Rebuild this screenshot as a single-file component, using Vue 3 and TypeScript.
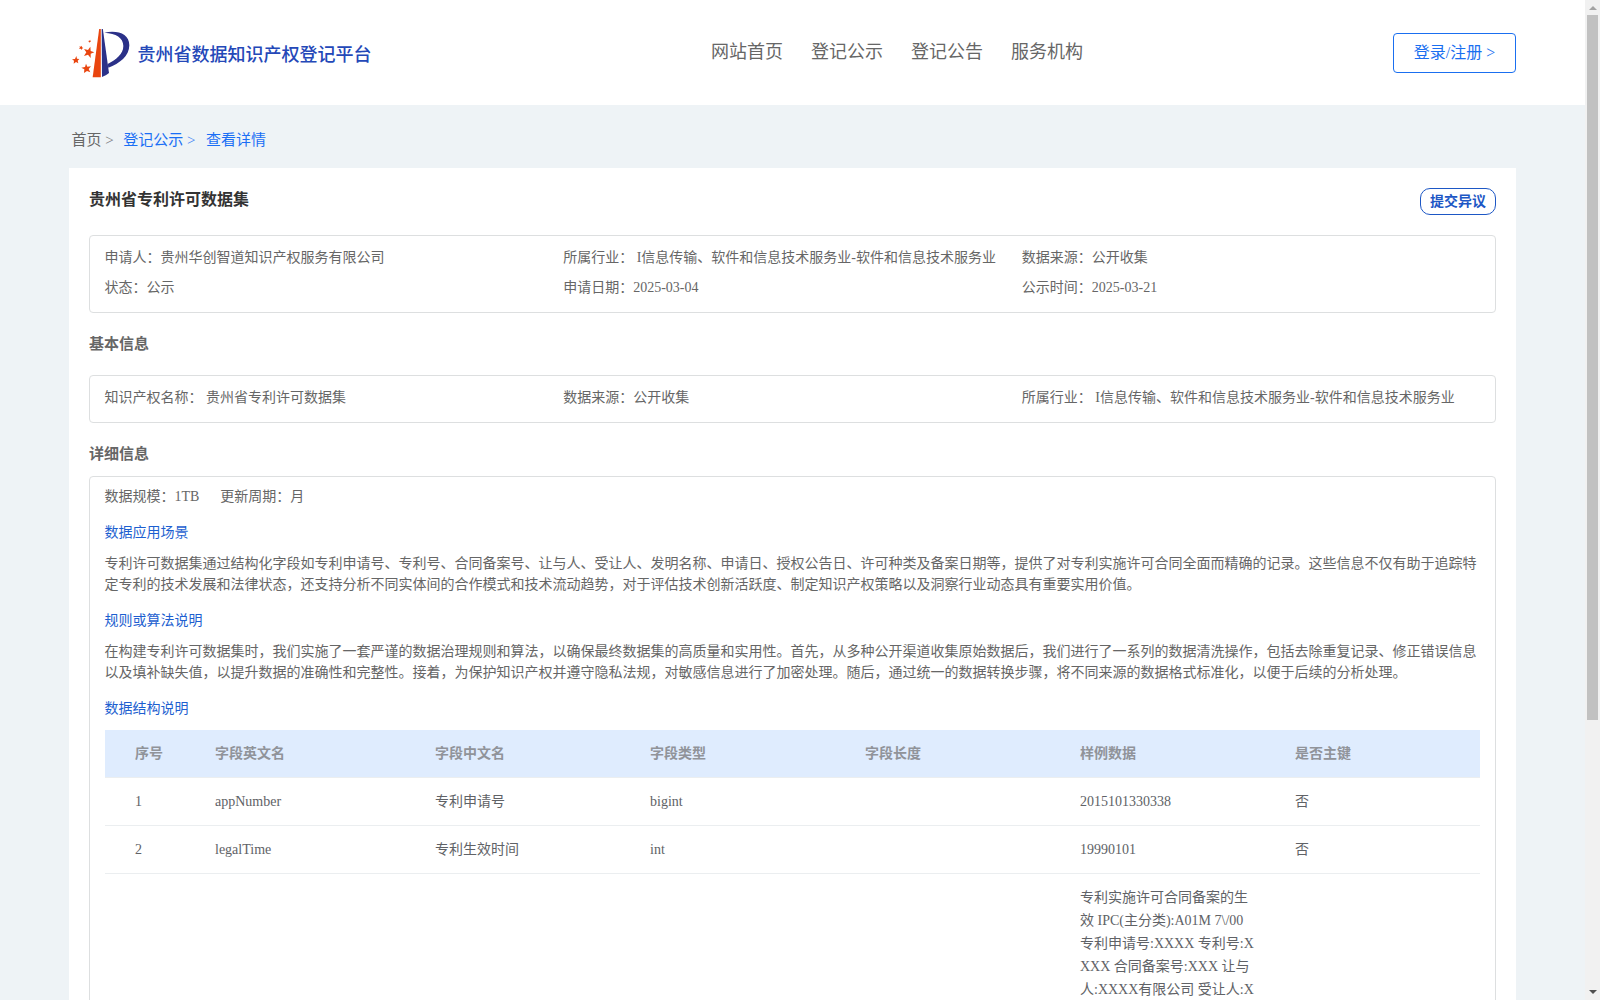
<script setup lang="ts">
const navItems: string[] = ['网站首页', '登记公示', '登记公告', '服务机构']

const summary: string[] = [
  '申请人：贵州华创智道知识产权服务有限公司',
  '所属行业： I信息传输、软件和信息技术服务业-软件和信息技术服务业',
  '数据来源：公开收集',
  '状态：公示',
  '申请日期：2025-03-04',
  '公示时间：2025-03-21',
]

const basics: string[] = [
  '知识产权名称： 贵州省专利许可数据集',
  '数据来源：公开收集',
  '所属行业： I信息传输、软件和信息技术服务业-软件和信息技术服务业',
]

interface Section {
  title: string
  lines: string[]
}

const sections: Section[] = [
  {
    title: '数据应用场景',
    lines: [
      '专利许可数据集通过结构化字段如专利申请号、专利号、合同备案号、让与人、受让人、发明名称、申请日、授权公告日、许可种类及备案日期等，提供了对专利实施许可合同全面而精确的记录。这些信息不仅有助于追踪特',
      '定专利的技术发展和法律状态，还支持分析不同实体间的合作模式和技术流动趋势，对于评估技术创新活跃度、制定知识产权策略以及洞察行业动态具有重要实用价值。',
    ],
  },
  {
    title: '规则或算法说明',
    lines: [
      '在构建专利许可数据集时，我们实施了一套严谨的数据治理规则和算法，以确保最终数据集的高质量和实用性。首先，从多种公开渠道收集原始数据后，我们进行了一系列的数据清洗操作，包括去除重复记录、修正错误信息',
      '以及填补缺失值，以提升数据的准确性和完整性。接着，为保护知识产权并遵守隐私法规，对敏感信息进行了加密处理。随后，通过统一的数据转换步骤，将不同来源的数据格式标准化，以便于后续的分析处理。',
    ],
  },
]

const headers: string[] = ['序号', '字段英文名', '字段中文名', '字段类型', '字段长度', '样例数据', '是否主键']

const rows: string[][] = [
  ['1', 'appNumber', '专利申请号', 'bigint', '', '2015101330338', '否'],
  ['2', 'legalTime', '专利生效时间', 'int', '', '19990101', '否'],
  [
    '',
    '',
    '',
    '',
    '',
    '专利实施许可合同备案的生\n效 IPC(主分类):A01M 7\\/00\n专利申请号:XXXX 专利号:X\nXXX 合同备案号:XXX 让与\n人:XXXX有限公司 受让人:X',
    '',
  ],
]
</script>

<template>
  <div class="window">
    <div class="page">
      <header class="header">
        <div class="brand">
          <svg class="logo" viewBox="36 54 174 150" aria-hidden="true">
            <path d="M117.500 57h5v145H98z" fill="#e9450f" />
            <path d="M125 57h3.500L147 189q-9 8-21 12z" fill="#2b3188" />
            <path
              d="M133 68C174 60 208 72 208 106C208 138 179 161 145 173L143 162C169 149 190 132 190 108C190 83 168 70 133 68z"
              fill="#2b3188"
            />
            <g fill="#e9450f">
              <path d="M91 110l1 13 11 4-11 4v13l-8-10-12 4 7-11-7-10 12 3z" />
              <path d="M49 138l2 8 7 1-5 5 2 8-7-4-7 5 1-9-6-4 9-1z" />
              <path d="M78 161l4 9 11-1-7 8 5 10-10-4-9 6 1-11-9-5 11-2z" />
              <path d="M65 107l1 5 4 2-4 2-1 4-3-4-5 0 3-4-2-4 4 2z" />
              <path d="M91 89l0 4 2 2-3 1-2 2-1-3-3-2 4-1z" />
            </g>
          </svg>
          <span class="brand-name">贵州省数据知识产权登记平台</span>
        </div>
        <nav class="nav">
          <a v-for="item in navItems" :key="item">{{ item }}</a>
        </nav>
        <button class="login">登录/注册 &gt;</button>
      </header>

      <div class="crumbs">
        <span>首页 <i>&gt;</i></span>
        <a class="second">登记公示 <i>&gt;</i></a>
        <a class="third">查看详情</a>
      </div>

      <main class="card">
        <div class="title-row">
          <h1>贵州省专利许可数据集</h1>
          <button class="objection">提交异议</button>
        </div>

        <div class="box summary">
          <span v-for="item in summary" :key="item">{{ item }}</span>
        </div>

        <h2 class="basic-title">基本信息</h2>
        <div class="box basics">
          <span v-for="item in basics" :key="item">{{ item }}</span>
        </div>

        <h2 class="detail-title">详细信息</h2>
        <div class="box detail">
          <div class="scale">
            <span>数据规模：1TB</span>
            <span>更新周期：月</span>
          </div>
          <section v-for="section in sections" :key="section.title">
            <h3>{{ section.title }}</h3>
            <p v-for="line in section.lines" :key="line">{{ line }}</p>
          </section>
          <h3 class="struct-title">数据结构说明</h3>
          <div class="table">
            <div class="tr head">
              <div v-for="h in headers" :key="h" class="td">{{ h }}</div>
            </div>
            <div v-for="(row, r) in rows" :key="r" class="tr">
              <div v-for="(cell, c) in row" :key="c" class="td">{{ cell }}</div>
            </div>
          </div>
        </div>
      </main>
    </div>

    <div class="scrollbar">
      <i class="arrow up"></i>
      <div class="thumb"></div>
      <i class="arrow down"></i>
    </div>
  </div>
</template>

<style>
body {
  margin: 0;
  overflow: hidden;
}
</style>

<style scoped>
* {
  box-sizing: border-box;
}
.window {
  display: flex;
  width: 1600px;
  height: 1000px;
  overflow: hidden;
  font-family: 'Liberation Serif', 'Noto Sans CJK SC', serif;
  font-size: 14px;
  color: #666;
}
.page {
  width: 1585px;
  height: 1000px;
  overflow: hidden;
  background: #eef3f6;
}
.header {
  display: flex;
  align-items: flex-start;
  height: 105px;
  padding-left: 72px;
  background: #fff;
}
.brand {
  display: flex;
  width: 639px;
  padding-top: 28px;
}
.logo {
  width: 58px;
  height: 50px;
}
.brand-name {
  margin-left: 7.5px;
  font-size: 18px;
  font-weight: 500;
  line-height: 54px;
  color: #2448b8;
  white-space: nowrap;
}
.nav {
  display: flex;
  gap: 28px;
  width: 682px;
  padding-top: 37px;
  font-size: 18px;
  line-height: 30px;
}
.login {
  width: 123px;
  height: 40px;
  margin-top: 33px;
  padding: 0;
  border: 1px solid #1a6ff0;
  border-radius: 4px;
  background: #fff;
  font-family: inherit;
  font-size: 16px;
  line-height: 38px;
  color: #1a6ff0;
}
.crumbs {
  display: flex;
  height: 63px;
  padding-left: 71.5px;
  font-size: 15px;
  line-height: 70px;
}
.crumbs i {
  font-style: normal;
  opacity: 0.85;
}
.crumbs a {
  color: #1a6ff5;
}
.second {
  margin-left: 9.5px;
}
.third {
  margin-left: 10.5px;
}
.card {
  width: 1447px;
  height: 900px;
  margin-left: 69px;
  padding: 0 20px;
  background: #fff;
}
.title-row {
  display: flex;
  justify-content: space-between;
  height: 67px;
}
h1,
h2,
h3,
p {
  margin: 0;
}
h1 {
  font-size: 16px;
  line-height: 64px;
  color: #333;
}
.objection {
  width: 76px;
  height: 27px;
  margin-top: 20px;
  padding: 0;
  border: 1px solid #1d57c5;
  border-radius: 10px;
  background: #fff;
  font-family: inherit;
  font-size: 14px;
  font-weight: 700;
  line-height: 24px;
  color: #1d57c5;
}
.box {
  border: 1px solid #dddfe0;
  border-radius: 4px;
}
.summary,
.basics {
  display: grid;
  grid-template-columns: repeat(3, 1fr);
  grid-auto-rows: 30px;
  padding: 7px 14.5px 0;
  line-height: 30px;
  white-space: nowrap;
}
.summary {
  height: 78px;
}
.basics {
  height: 48px;
}
h2 {
  font-size: 15px;
  color: #666;
}
.basic-title {
  height: 62px;
  line-height: 63px;
}
.detail-title {
  height: 53px;
  line-height: 62px;
}
.detail {
  height: 640px;
  padding: 9px 15px 0;
}
.scale {
  display: flex;
  gap: 21px;
  height: 36px;
  margin-left: -0.6px;
  line-height: 21px;
}
h3 {
  height: 31px;
  margin-left: -0.6px;
  font-size: 14px;
  font-weight: 400;
  line-height: 21px;
  color: #1d5fd0;
}
p {
  margin-left: -0.6px;
  line-height: 21px;
  white-space: nowrap;
}
section {
  height: 88px;
}
.struct-title {
  height: 32px;
}
.tr {
  display: grid;
  grid-template-columns: 100px 220px repeat(4, 215px) 195px;
  min-height: 48px;
  border-bottom: 1px solid #ebeef0;
}
.td {
  padding: 12px 10px;
  line-height: 23px;
  color: #606266;
  white-space: pre;
}
.td:first-child {
  padding-left: 30px;
}
.head {
  background: #dfecfe;
}
.head .td {
  font-weight: 700;
  color: #909399;
}
.scrollbar {
  display: flex;
  flex-direction: column;
  align-items: center;
  width: 15px;
  height: 1000px;
  background: #f1f1f1;
}
.thumb {
  width: 11px;
  height: 705px;
  margin-top: 5px;
  margin-bottom: 270px;
  background: #c1c1c1;
}
.arrow {
  width: 0;
  height: 0;
  border-left: 4px solid transparent;
  border-right: 4px solid transparent;
}
.up {
  margin-top: 6px;
  border-bottom: 4px solid #a3a3a3;
}
.down {
  border-top: 4px solid #505050;
}
</style>
